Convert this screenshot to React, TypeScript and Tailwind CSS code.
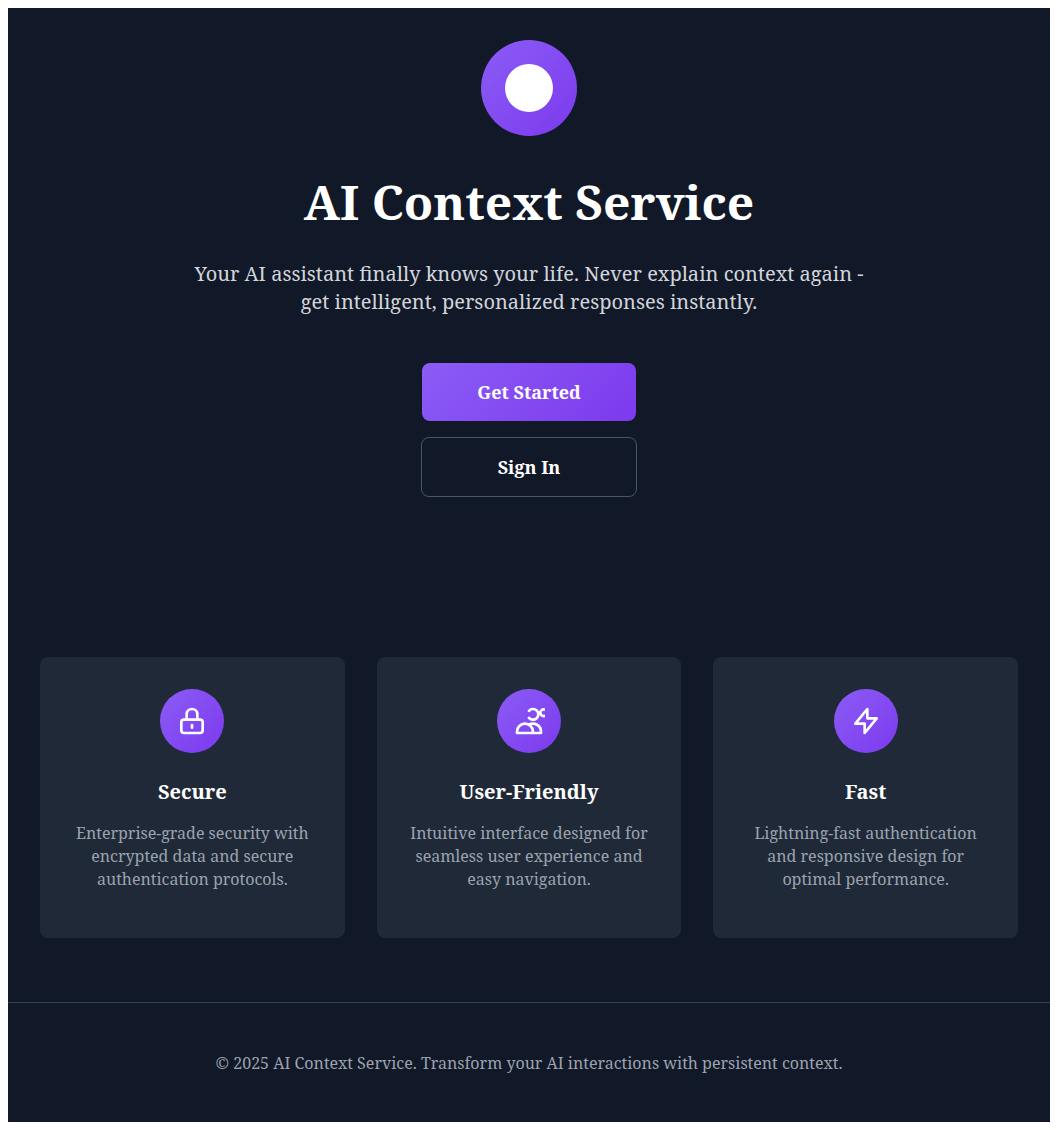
import type { ReactNode } from 'react';

const GRADIENT = 'bg-[linear-gradient(135deg,#8b5cf6,#7c3aed)]';

function FeatureIcon({ children }: { children: ReactNode }) {
  return (
    <div className={`mb-[25px] flex h-16 w-16 items-center justify-center rounded-full ${GRADIENT}`}>
      <svg
        className="h-8 w-8 text-white"
        viewBox="0 0 24 24"
        fill="none"
        stroke="currentColor"
        strokeWidth={2}
        strokeLinecap="round"
        strokeLinejoin="round"
      >
        {children}
      </svg>
    </div>
  );
}

const features = [
  {
    title: 'Secure',
    text: 'Enterprise-grade security with encrypted data and secure authentication protocols.',
    icon: (
      <path d="M12 15v2m-6 4h12a2 2 0 002-2v-6a2 2 0 00-2-2H6a2 2 0 00-2 2v6a2 2 0 002 2zm10-10V7a4 4 0 00-8 0v4h8z" />
    ),
  },
  {
    title: 'User-Friendly',
    text: 'Intuitive interface designed for seamless user experience and easy navigation.',
    icon: (
      <path d="M12 4.354a4 4 0 110 5.292M15 21H3v-1a6 6 0 0112 0v1zm0 0h6v-1a6 6 0 00-9-5.197m13.5-9a2.5 2.5 0 11-5 0 2.5 2.5 0 015 0z" />
    ),
  },
  {
    title: 'Fast',
    text: 'Lightning-fast authentication and responsive design for optimal performance.',
    icon: <path d="M13 10V3L4 14h7v7l9-11h-7z" />,
  },
];

export default function App() {
  return (
    <div className="h-[1130px] bg-white p-2 font-['Noto_Serif',serif]">
      <div className="flex h-full flex-col bg-[#111827] text-white">
        <main className="flex flex-col items-center px-8 pt-8 text-center">
          <div className={`flex h-24 w-24 items-center justify-center rounded-full ${GRADIENT}`}>
            <div className="h-12 w-12 rounded-full bg-white" />
          </div>
          <h1 className="mt-8 text-5xl leading-[67px] font-bold">AI Context Service</h1>
          <p className="mt-[25px] w-[672px] text-xl leading-7 text-[#d1d5db]">
            Your AI assistant finally knows your life. Never explain context again - get intelligent,
            personalized responses instantly.
          </p>
          <button className={`mt-[47px] h-[58px] w-[214px] rounded-lg text-lg font-bold ${GRADIENT}`}>
            Get Started
          </button>
          <button className="mt-4 h-[60px] w-[216px] rounded-lg border border-[#4b5563] text-lg font-bold">
            Sign In
          </button>
        </main>
        <section className="mt-40 grid grid-cols-3 gap-8 px-8">
          {features.map((f) => (
            <article
              key={f.title}
              className="flex h-[281px] flex-col items-center rounded-lg bg-[#1f2937] p-8 text-center"
            >
              <FeatureIcon>{f.icon}</FeatureIcon>
              <h3 className="text-xl leading-7 font-bold">{f.title}</h3>
              <p className="mt-4 text-base leading-[23px] text-[#9ca3af]">{f.text}</p>
            </article>
          ))}
        </section>
        <footer className="mt-16 flex flex-1 items-start justify-center border-t border-[#374151] pt-12 text-base text-[#9ca3af]">
          <p>© 2025 AI Context Service. Transform your AI interactions with persistent context.</p>
        </footer>
      </div>
    </div>
  );
}
